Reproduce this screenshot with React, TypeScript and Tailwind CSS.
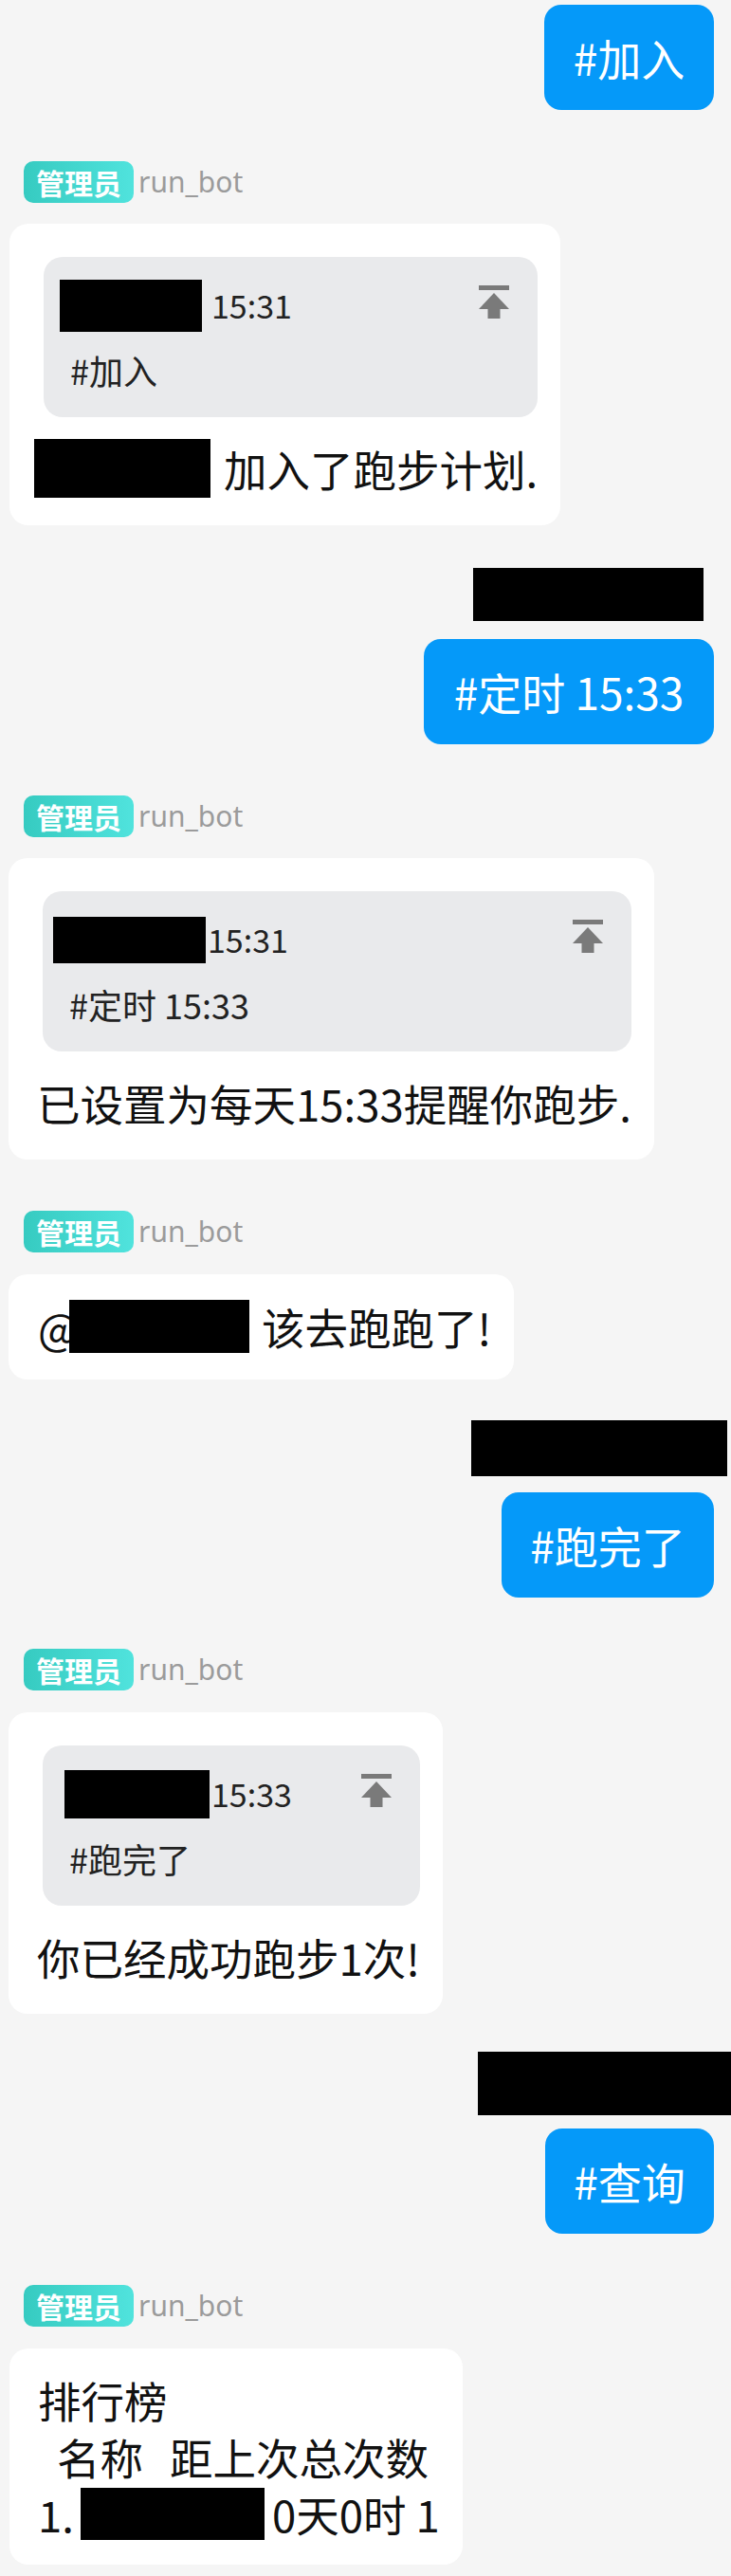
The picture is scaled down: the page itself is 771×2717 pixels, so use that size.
import React from "react";

const PinIcon = () => (
  <svg
    className="absolute right-[30px] top-[30px]"
    width="32"
    height="35"
    viewBox="0 0 32 35"
    fill="#7a7a7a"
  >
    <rect x="0" y="0" width="32" height="5" />
    <polygon points="16,8 0,25 32,25" />
    <rect x="9.5" y="24" width="13" height="11" />
  </svg>
);

const Label = ({ mt }: { mt: string }) => (
  <div className={`flex items-center h-[44px] ml-[25px] ${mt}`}>
    <span className="h-[44px] px-[13px] rounded-[10px] bg-linear-to-r from-[#36cbc1] to-[#50e3dd] text-white text-[30px] leading-[44px] font-semibold">
      管理员
    </span>
    <span className="ml-[5px] text-[30px] leading-[46px] text-[#9b9b9b] font-['Noto_Sans',sans-serif]">
      run_bot
    </span>
  </div>
);

const Bubble = ({ text, w, mt }: { text: string; w: string; mt: string }) => (
  <div
    className={`self-end mr-[18px] h-[111px] rounded-[18px] bg-[#0599f9] text-white text-[46px] flex items-center justify-center whitespace-nowrap ${w} ${mt}`}
  >
    {text}
  </div>
);

const Quote = ({
  box,
  time,
  text,
}: {
  box: string;
  time: string;
  text: string;
}) => (
  <div className="relative ml-[6px] rounded-[20px] bg-[#e9eaec] pt-[23px] pb-[26px]">
    <div className="flex items-center h-[56px]">
      <div className={`bg-black ${box}`} />
      <span className="text-[34px] leading-[40px] text-[#222]">{time}</span>
    </div>
    <div className="mt-[16px] pl-[28px] text-[36px] leading-[48px] text-[#222] whitespace-nowrap">
      {text}
    </div>
    <PinIcon />
  </div>
);

export default function App() {
  return (
    <div className="min-h-[2717px] w-full bg-[#f5f5f5] font-['Noto_Sans_CJK_SC',sans-serif] flex flex-col pb-[10px]">
      <Bubble text="#加入" w="w-[179px]" mt="mt-[5px]" />

      <Label mt="mt-[54px]" />
      <div className="self-start ml-[10px] mt-[22px] bg-white rounded-[20px] pl-[30px] pr-[24px] pt-[35px] pb-[30px]">
        <Quote box="ml-[17px] w-[150px] h-[55px] mr-[10px]" time="15:31" text="#加入" />
        <div className="mt-[24px] h-[60px] flex items-center text-[45.5px] leading-[60px] text-[#111] whitespace-nowrap">
          <div className="-ml-[4px] w-[186px] h-[62px] bg-black mr-[14px]" />
          <span>加入了跑步计划.</span>
        </div>
      </div>

      <div className="self-end mr-[29px] mt-[45px] w-[243px] h-[56px] bg-black" />
      <Bubble text="#定时 15:33" w="w-[306px]" mt="mt-[19px]" />

      <Label mt="mt-[54px]" />
      <div className="self-start ml-[9px] mt-[22px] bg-white rounded-[20px] pl-[30px] pr-[24px] pt-[35px] pb-[30px]">
        <Quote box="ml-[11px] w-[161px] h-[49px] mr-[2px]" time="15:31" text="#定时 15:33" />
        <div className="mt-[24px] h-[60px] flex items-center text-[45.5px] leading-[60px] text-[#111] whitespace-nowrap">
          已设置为每天15:33提醒你跑步.
        </div>
      </div>

      <Label mt="mt-[54px]" />
      <div className="self-start ml-[9px] mt-[23px] bg-white rounded-[20px] pl-[31px] pr-[24px] pt-[25px] pb-[26px]">
        <div className="h-[60px] flex items-center text-[45.5px] leading-[60px] text-[#111] whitespace-nowrap">
          <span className="inline-block w-[33px]">@</span>
          <div className="w-[190px] h-[56px] bg-black mr-[13px]" />
          <span>该去跑跑了!</span>
        </div>
      </div>

      <div className="self-end mr-[4px] mt-[43px] w-[270px] h-[59px] bg-black" />
      <Bubble text="#跑完了" w="w-[224px]" mt="mt-[17px]" />

      <Label mt="mt-[54px]" />
      <div className="self-start ml-[9px] mt-[23px] bg-white rounded-[20px] pl-[30px] pr-[24px] pt-[35px] pb-[30px]">
        <Quote box="ml-[23px] w-[153px] h-[51px] mr-[2px]" time="15:33" text="#跑完了" />
        <div className="mt-[24px] h-[60px] flex items-center text-[45.5px] leading-[60px] text-[#111] whitespace-nowrap">
          你已经成功跑步1次!
        </div>
      </div>

      <div className="self-end mt-[40px] w-[267px] h-[67px] bg-black" />
      <Bubble text="#查询" w="w-[178px]" mt="mt-[14px]" />

      <Label mt="mt-[54px]" />
      <div className="self-start ml-[10px] mt-[23px] bg-white rounded-[20px] pl-[30px] pr-[24px] py-[24px] text-[45.5px] leading-[60px] text-[#111] whitespace-nowrap">
        <div className="h-[60px]">排行榜</div>
        <div className="h-[60px] flex items-center">
          <span className="ml-[20px]">名称</span>
          <span className="ml-[28px]">距上次总次数</span>
        </div>
        <div className="h-[60px] flex items-center">
          <span>1.</span>
          <div className="ml-[7px] w-[194px] h-[55px] bg-black mr-[8px]" />
          <span>0天0时 1</span>
        </div>
      </div>
    </div>
  );
}
